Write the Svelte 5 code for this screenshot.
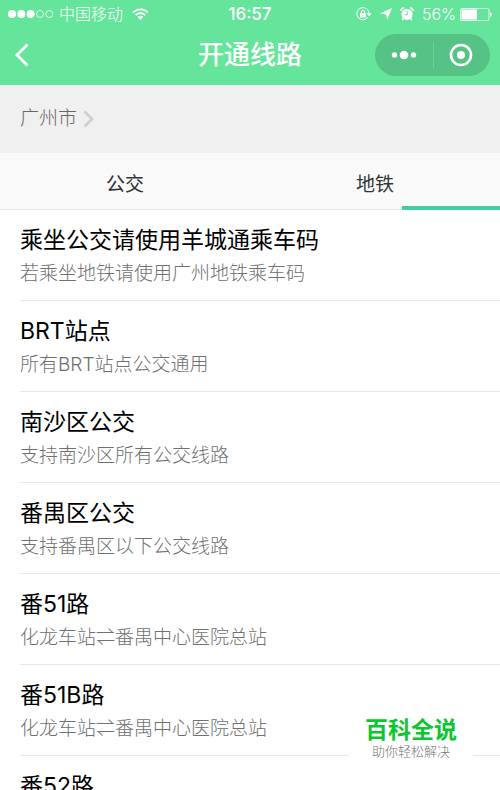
<script lang="ts">
  interface Line {
    name: string;
    desc?: string;
  }

  const tabs = ["公交", "地铁"];
  let active = $state(0);

  const lines: Line[] = [
    { name: "乘坐公交请使用羊城通乘车码", desc: "若乘坐地铁请使用广州地铁乘车码" },
    { name: "BRT站点", desc: "所有BRT站点公交通用" },
    { name: "南沙区公交", desc: "支持南沙区所有公交线路" },
    { name: "番禺区公交", desc: "支持番禺区以下公交线路" },
    { name: "番51路", desc: "化龙车站⇌番禺中心医院总站" },
    { name: "番51B路", desc: "化龙车站⇌番禺中心医院总站" },
    { name: "番52路" },
  ];
</script>

<div class="screen">
  <header class="header">
    <div class="status">
      <div class="status-side">
        <svg width="46" height="12" viewBox="0 0 46 12" aria-hidden="true">
          <g fill="#fff">
            <circle cx="4" cy="6" r="4" />
            <circle cx="13.3" cy="6" r="4" />
            <circle cx="22.6" cy="6" r="4" />
          </g>
          <g fill="none" stroke="#fff" stroke-width="0.8">
            <circle cx="32" cy="6" r="3.5" />
            <circle cx="41.3" cy="6" r="3.5" />
          </g>
        </svg>
        <span class="carrier">中国移动</span>
        <svg class="wifi" width="17" height="12" viewBox="0 0 17 12" aria-hidden="true">
          <g fill="none" stroke="#fff" stroke-width="1.8">
            <path d="M1 4.4a10.6 10.6 0 0 1 15 0" />
            <path d="M3.7 7.1a6.8 6.8 0 0 1 9.6 0" />
          </g>
          <path d="M8.5 12 5.6 9.1a4.1 4.1 0 0 1 5.8 0z" fill="#fff" />
        </svg>
      </div>
      <span class="time">16:57</span>
      <div class="status-side right">
        <svg width="16" height="14" viewBox="0 0 16 14" aria-hidden="true">
          <path d="M11.6 10.6A6.1 6.1 0 1 1 13 6.2" fill="none" stroke="#fff" stroke-width="1" />
          <path d="M10.7 6.2h5l-2.5 3.2z" fill="#fff" />
          <rect x="4" y="6.2" width="6" height="4.4" rx="0.5" fill="#fff" />
          <path d="M5.4 6.5V5a1.6 1.6 0 0 1 3.2 0v1.5" fill="none" stroke="#fff" stroke-width="1" />
        </svg>
        <svg width="12" height="12" viewBox="0 0 12 12" aria-hidden="true">
          <path d="M12 0 7.2 12 6.2 6.4 0 5.4z" fill="#fff" />
        </svg>
        <svg width="14" height="14" viewBox="0 0 14 14" aria-hidden="true">
          <circle cx="7" cy="7.4" r="5.6" fill="#fff" />
          <path d="M.8 4A3 3 0 0 1 4 1.1M10 1.1A3 3 0 0 1 13.2 4M3.5 11.5l-1.4 1.6M10.5 11.5l1.4 1.6" fill="none" stroke="#fff" stroke-width="1.5" />
          <path d="M7.2 4v3.8H4.5" fill="none" stroke="#65e59b" stroke-width="1" />
        </svg>
        <span class="percent">56%</span>
        <svg width="32" height="13" viewBox="0 0 32 13" aria-hidden="true">
          <rect x="0.5" y="0.5" width="28.5" height="12" rx="1.5" fill="none" stroke="#fff" stroke-width="0.8" />
          <rect x="1.5" y="1.5" width="15.5" height="10" fill="#fff" />
          <path d="M30 4.2a2.4 2.4 0 0 1 0 4.6z" fill="#fff" />
        </svg>
      </div>
    </div>
    <div class="nav">
      <button class="back" aria-label="返回">
        <svg width="14" height="24" viewBox="0 0 14 24" aria-hidden="true">
          <path d="M12.5 1.5 2 12l10.5 10.5" fill="none" stroke="#fff" stroke-width="2.8" />
        </svg>
      </button>
      <h1>开通线路</h1>
      <div class="capsule">
        <button aria-label="更多">
          <svg width="26" height="10" viewBox="0 0 26 10" aria-hidden="true">
            <g fill="#fff">
              <circle cx="3.5" cy="5" r="2.7" />
              <circle cx="13" cy="5" r="4.3" />
              <circle cx="22.5" cy="5" r="2.7" />
            </g>
          </svg>
        </button>
        <button aria-label="关闭">
          <svg width="24" height="24" viewBox="0 0 24 24" aria-hidden="true">
            <circle cx="12" cy="12" r="10" fill="none" stroke="#fff" stroke-width="2.6" />
            <circle cx="12" cy="12" r="4" fill="#fff" />
          </svg>
        </button>
      </div>
    </div>
  </header>

  <button class="city">
    <span>广州市</span>
    <svg width="11" height="18" viewBox="0 0 11 18" aria-hidden="true">
      <path d="M1.5 1.5 9 9l-7.5 7.5" fill="none" stroke="#cfcfcf" stroke-width="2.6" />
    </svg>
  </button>

  <div class="tabs" role="tablist">
    {#each tabs as tab, i}
      <button role="tab" aria-selected={active === i} onclick={() => (active = i)}>{tab}</button>
    {/each}
    <span class="tab-line"></span>
  </div>

  <ul class="lines">
    {#each lines as line}
      <li>
        <h2>{line.name}</h2>
        {#if line.desc}
          <p>{line.desc}</p>
        {/if}
      </li>
    {/each}
  </ul>

  <aside class="brand">
    <strong>百科全说</strong>
    <span>助你轻松解决</span>
  </aside>
</div>

<style>
  :global(body) {
    margin: 0;
    background: #fff;
  }

  .screen {
    position: relative;
    height: 100vh;
    overflow: hidden;
    font-family: Inter, "Noto Sans CJK SC", sans-serif;
    font-weight: 300;
    background: #fff;
    color: #000;
  }

  button {
    padding: 0;
    border: none;
    background: none;
    font: inherit;
    color: inherit;
    cursor: pointer;
  }

  svg {
    display: block;
    flex: none;
  }

  .header {
    background: #65e59b;
    color: #fff;
  }

  .status {
    display: grid;
    grid-template-columns: 1fr auto 1fr;
    align-items: center;
    height: 28px;
    padding: 0 8px;
  }

  .status-side {
    display: flex;
    align-items: center;
    font-size: 16px;
    line-height: 28px;
  }

  .carrier {
    margin-left: 5px;
  }

  .wifi {
    margin-left: 9px;
  }

  .right {
    justify-content: flex-end;
    gap: 8px;
  }

  .right .percent {
    margin-right: -4px;
  }

  .time {
    font-size: 17px;
    font-weight: 500;
    line-height: 28px;
  }

  .nav {
    display: grid;
    grid-template-columns: 1fr auto 1fr;
    align-items: center;
    height: 57px;
    padding: 0 10px 4px;
    box-sizing: border-box;
  }

  .back {
    justify-self: start;
    padding: 0 5px;
  }

  h1 {
    margin: 0;
    font-size: 26px;
    font-weight: 500;
    line-height: 40px;
  }

  .capsule {
    justify-self: end;
    display: flex;
    width: 115px;
    height: 42px;
    border-radius: 21px;
    background: #56c285;
  }

  .capsule button {
    flex: 1;
    display: flex;
    align-items: center;
    justify-content: center;
  }

  .capsule button + button {
    position: relative;
  }

  .capsule button + button::before {
    content: "";
    position: absolute;
    left: 0;
    top: 8px;
    bottom: 8px;
    width: 1px;
    background: #70ce98;
  }

  .city {
    display: flex;
    align-items: center;
    gap: 6px;
    width: 100%;
    height: 68px;
    padding: 0 20px;
    background: #f0f0f0;
    color: #666;
    font-size: 19px;
    line-height: 26px;
  }

  .tabs {
    position: relative;
    display: flex;
    height: 57px;
    box-sizing: border-box;
    border-bottom: 1px solid #e8e8e8;
    background: #fafafa;
  }

  .tabs button {
    flex: 1;
    padding-top: 2px;
    font-size: 19px;
    font-weight: 400;
    color: #333;
  }

  .tab-line {
    position: absolute;
    right: 0;
    bottom: -1px;
    width: 98px;
    height: 4px;
    background: #42cfa5;
  }

  .lines {
    margin: 0;
    padding: 0 0 0 20px;
    list-style: none;
  }

  li {
    padding: 14px 0 10px;
    border-bottom: 1px solid #e8e8e8;
  }

  h2 {
    margin: 0;
    font-size: 23px;
    font-weight: 400;
    line-height: 33px;
  }

  p {
    margin: 0;
    font-size: 19px;
    line-height: 33px;
    color: #707070;
  }

  .brand {
    position: absolute;
    right: 27px;
    bottom: 23px;
    display: flex;
    flex-direction: column;
    align-items: center;
    width: 124px;
    padding: 5px 0 8px;
    background: #fff;
  }

  .brand strong {
    font-size: 23px;
    font-weight: 700;
    line-height: 26px;
    color: #0ac62f;
  }

  .brand span {
    font-size: 13px;
    line-height: 16px;
    color: #777;
  }
</style>
